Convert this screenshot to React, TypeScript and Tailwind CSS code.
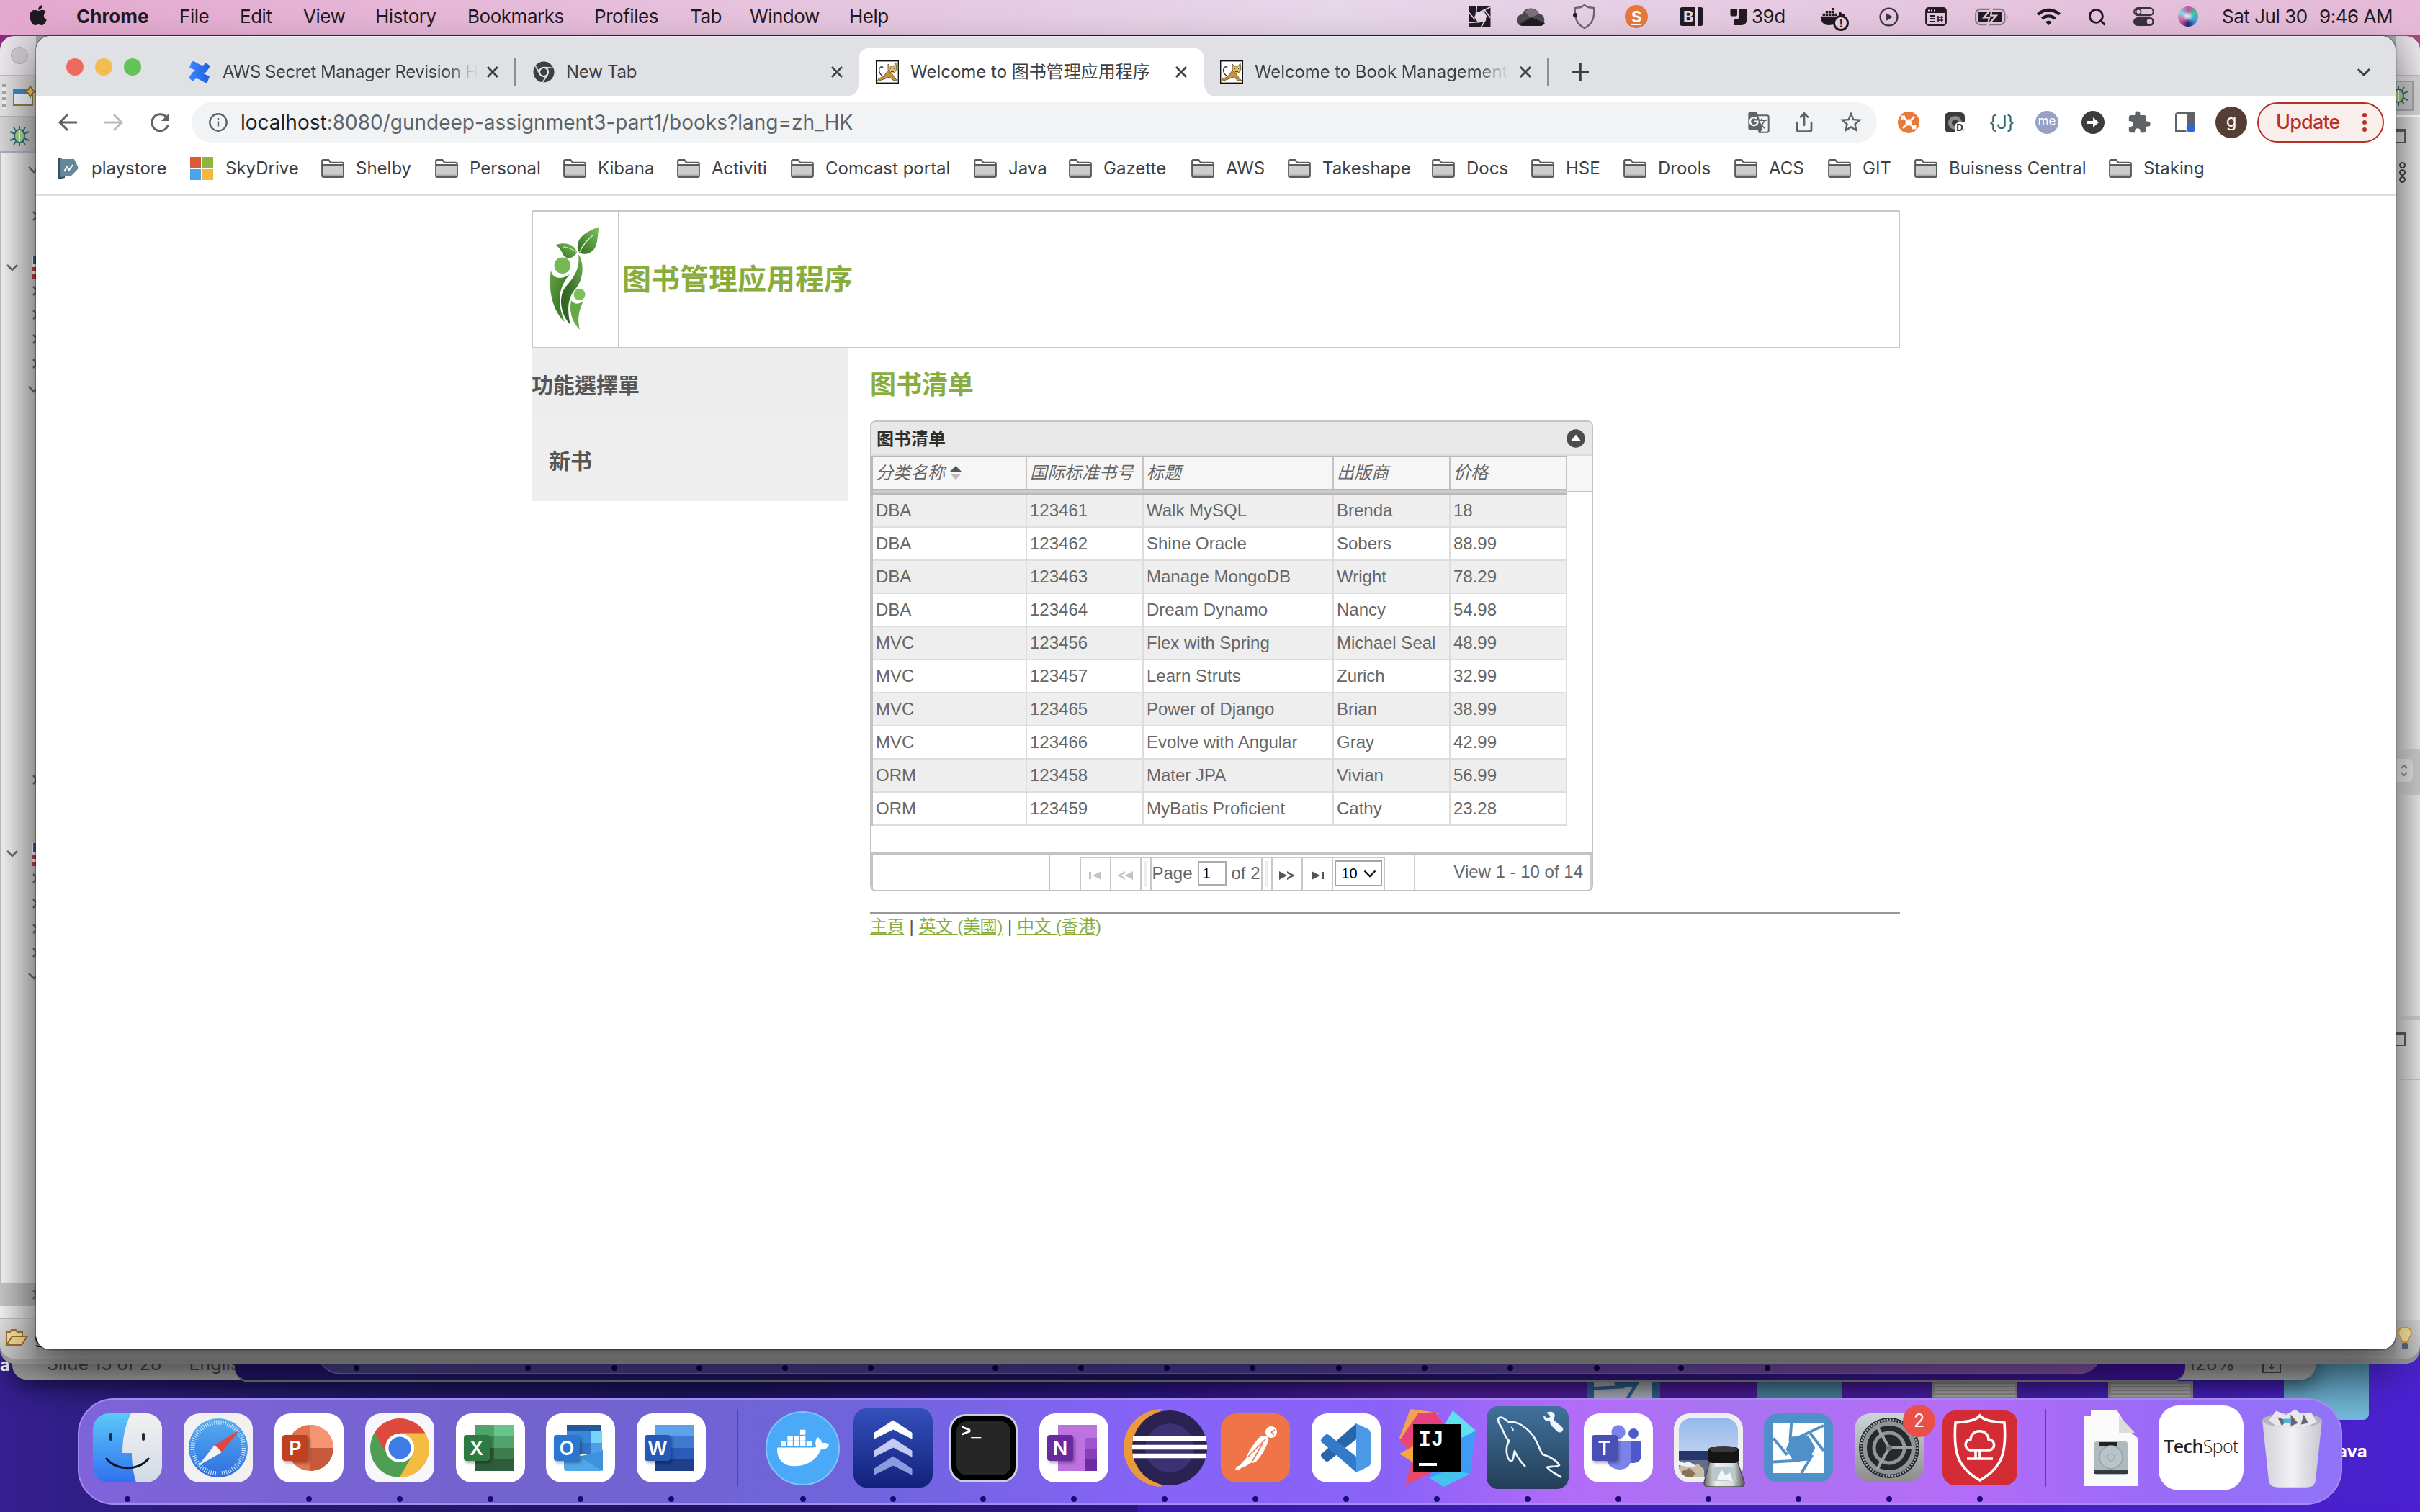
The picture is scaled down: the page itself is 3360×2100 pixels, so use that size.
import React from "react";
import { FaApple, FaDocker, FaChrome } from "react-icons/fa";
import { MdExtension, MdGTranslate, MdStarOutline, MdWifi } from "react-icons/md";
import { Search, Share } from "lucide-react";

const CJK = "font-['Liberation_Sans','Noto_Sans_CJK_SC',sans-serif]";

/* ---------- menu bar ---------- */

const MENUS: [string, string][] = [
  ["Chrome", "w-[143px] font-bold tracking-normal"],
  ["File", "w-[84px]"],
  ["Edit", "w-[88px]"],
  ["View", "w-[100px]"],
  ["History", "w-[128px]"],
  ["Bookmarks", "w-[176px]"],
  ["Profiles", "w-[133px]"],
  ["Tab", "w-[83px]"],
  ["Window", "w-[138px]"],
  ["Help", "w-[60px]"],
];

function Aperture({ className, blade, gap }: { className: string; blade: string; gap: string }) {
  return (
    <svg viewBox="0 0 72 72" className={className}>
      <rect width="72" height="72" fill={blade} />
      <polygon points="26,20 50,18 60,36 50,54 30,56 18,38" fill={gap} />
      <g stroke={gap} strokeWidth="4" fill="none">
        <path d="M26 0 L24 26 M0 22 L20 46 M0 56 L38 54 M40 72 L56 46 M72 40 L52 14 M72 4 L38 20" />
      </g>
    </svg>
  );
}

function MenuBar() {
  return (
    <header className="flex h-12 w-full items-center bg-linear-to-r from-[#e5a8cf] via-[#e6d7e9] via-55% to-[#e5b9d7] pb-[2px] text-[26px] leading-none tracking-[-0.018em] whitespace-nowrap text-[#1f1a20]">
      <div className="flex w-[106px] justify-center">
        <FaApple className="mb-1 size-[32px]" />
      </div>
      {MENUS.map(([label, cls]) => (
        <span key={label} className={cls}>{label}</span>
      ))}
      <div className="ml-auto flex items-center">
        <Aperture className="mr-[36px] h-[30px] w-[31px]" blade="#221c22" gap="#e6d7e9" />
        <svg viewBox="0 0 40 27" className="mr-[38px] h-[27px] w-[40px]">
          <path d="M8 26a8 8 0 0 1-1-16A13 13 0 0 1 31 9a9 9 0 0 1 2 17z" fill="#4f4850" />
          <path d="M11 6a13 13 0 0 1 20 3l-12 6z" fill="#7b737c" />
          <path d="M3 24L20 14l19 8a8 8 0 0 1-7 4H8z" fill="#211c21" />
        </svg>
        <svg viewBox="0 0 32 36" className="mr-[40px] h-[36px] w-[32px]" fill="none" stroke="#6d656e" strokeWidth="2.4">
          <path d="M16 2l5 3 8 1c1 12-1 22-13 28C4 28 2 18 3 6l8-1z" />
          <circle cx="3" cy="16" r="3" fill="#211c21" stroke="none" />
        </svg>
        <span className="mr-[44px] flex size-8 items-center justify-center rounded-full bg-[#e8793a] text-[22px] font-bold text-white underline">S</span>
        <span className="mr-[37px] flex h-[26px] w-[33px] items-center rounded-sm bg-[#221c22] pl-[5px] text-[22px] font-bold text-[#e6d7e9]">
          B<i className="ml-[3px] h-[26px] w-[3px] bg-[#e6d7e9]" />
        </span>
        <svg viewBox="0 0 24 26" className="mr-[6px] h-[25px] w-6">
          <path d="M0 1h10v8q0 3-3 3H2q-2 0-2-2zM13 1h11v15q0 9-9 9H5v-8l5-1q3-1 3-4z" fill="#221c22" />
        </svg>
        <span className="w-[96px]">39d</span>
        <span className="relative mr-[42px] flex h-[32px] w-[39px] items-center">
          <FaDocker className="size-[34px]" />
          <i className="absolute right-0 bottom-[-4px] flex size-[22px] items-center justify-center rounded-full border-[3px] border-[#221c22] bg-[#e6d2e6] text-[15px] font-bold not-italic">!</i>
        </span>
        <svg viewBox="0 0 28 28" className="mr-[37px] h-[27px] w-[27px]">
          <circle cx="14" cy="14" r="12.4" fill="none" stroke="#39323a" strokeWidth="2.4" />
          <path d="M10.500 8.500l9 5.500-9 5.500z" fill="#39323a" />
        </svg>
        <svg viewBox="0 0 30 26" className="mr-[38px] h-[26px] w-[30px]">
          <rect x="1.300" y="1.300" width="27.400" height="23.400" rx="3.500" fill="none" stroke="#221c22" strokeWidth="2.400" />
          <rect x="1" y="1" width="28" height="7" rx="3" fill="#221c22" />
          <path d="M4 4.500h2m2 0h2m2 0h2" stroke="#e6cfe4" strokeWidth="2" />
          <path d="M6 12h7M6 16h7M6 20h7" stroke="#221c22" strokeWidth="2" />
          <path d="M18 12v8M23 12v8M16 14h9M16 18h9" stroke="#221c22" strokeWidth="1.500" />
        </svg>
        <svg viewBox="0 0 49 26" className="mr-[38px] h-[25px] w-[49px]">
          <rect x="1.200" y="2" width="42" height="22" rx="6.500" fill="none" stroke="#857a86" strokeWidth="2.200" />
          <rect x="4.500" y="5.300" width="35" height="15.500" rx="3.500" fill="#221c22" />
          <path d="M25 0L13 14h8l-3 12 13-15h-8z" fill="#221c22" stroke="#e5c6de" strokeWidth="2.400" />
          <path d="M46 9q3 4 0 8z" fill="#857a86" />
        </svg>
        <MdWifi className="mr-[34px] ml-[-3px] h-[36px] w-[39px]" />
        <Search className="mr-[37px] size-[27px]" strokeWidth={2.6} />
        <svg viewBox="0 0 29 26" className="mr-[33px] h-[26px] w-[29px]">
          <rect x="1.200" y="1.200" width="26.600" height="10" rx="5" fill="none" stroke="#39323a" strokeWidth="2.200" />
          <circle cx="7" cy="6.200" r="3.600" fill="none" stroke="#39323a" strokeWidth="1.800" />
          <rect y="14" width="29" height="12" rx="6" fill="#39323a" />
          <circle cx="22.500" cy="20" r="3.800" fill="#e5c2dc" />
        </svg>
        <span className="mr-[33px] size-7 rounded-full bg-[conic-gradient(#d14aa0,#39c5a4,#3fa1e8,#1b2b70,#e8559a,#7ee0e8,#d14aa0)]">
          <i className="m-[9px] block size-[10px] rounded-full bg-white/80 blur-[2px]" />
        </span>
        <span className="w-[135px]">Sat Jul 30</span>
        <span className="w-[140px]">9:46 AM</span>
      </div>
    </header>
  );
}

/* ---------- browser chrome ---------- */

function CloseX() {
  return (
    <svg viewBox="0 0 18 18" className="size-[18px] shrink-0" stroke="#3c4043" strokeWidth="2.800">
      <path d="M2 2l14 14M16 2L2 16" />
    </svg>
  );
}

function Tomcat() {
  return (
    <svg viewBox="0 0 32 32" className="size-8 shrink-0">
      <rect x="0.700" y="0.700" width="30.600" height="30.600" fill="#fff" stroke="#111" strokeWidth="1.400" />
      <path d="M17 5l3 3h5l3-4 1 8-3 5-5 1-4-5z" fill="#e2bb62" stroke="#55432a" strokeWidth="0.800" />
      <path d="M17 14l6 5 3 5 4 4h-5l-6-5-8 3-6 2-3 1 2-4 6-2z" fill="#c8923a" stroke="#55432a" strokeWidth="0.800" />
      <path d="M10 22C4 18 3 12 7 9q3-1 3 2" fill="none" stroke="#333" strokeWidth="1.400" />
      <path d="M20 11h1M25 11h1M21 15h4" stroke="#222" strokeWidth="1.400" />
    </svg>
  );
}

function Confluence() {
  return (
    <svg viewBox="0 0 32 32" className="size-8 shrink-0">
      <defs>
        <linearGradient id="cf" x1="1" x2="0"><stop offset="0" stopColor="#1d5fdc" /><stop offset="1" stopColor="#3f86ff" /></linearGradient>
      </defs>
      <path d="M1 24l5-7c3-4 7-3 11-1l13 6-3 8c-1 1-2 1-3 1l-9-5c-3-1-5-1-6 1l-2 2z" fill="url(#cf)" />
      <path d="M31 8l-5 7c-3 4-7 3-11 1L2 10l3-8c1-1 2-1 3-1l9 5c3 1 5 1 6-1l2-2z" fill="url(#cf)" />
    </svg>
  );
}

function TabStrip() {
  return (
    <div className="flex h-[84px] shrink-0 items-end border-t-2 border-[#eceef1] bg-[#dfe1e5] text-[24px] tracking-[-0.01em] whitespace-nowrap text-[#3c4043]">
      <div className="flex h-[82px] w-[211px] gap-4 pt-[29px] pl-[42px]">
        <i className="size-6 rounded-full bg-[#ed6a5e]" />
        <i className="size-6 rounded-full bg-[#f4bd50]" />
        <i className="size-6 rounded-full bg-[#61c454]" />
      </div>
      <div className="flex h-[68px] w-[455px] items-center">
        <Confluence />
        <div className="ml-4 w-[366px] overflow-hidden bg-linear-to-r from-[#3c4043] from-84% to-transparent to-97% bg-clip-text tracking-[-0.02em] text-transparent">AWS Secret Manager Revision H</div>
        <CloseX />
        <i className="ml-[21px] h-10 w-[2px] bg-[#8b8e92]" />
      </div>
      <div className="flex h-[68px] w-[476px] items-center pl-[24px]">
        <FaChrome className="size-[30px]" />
        <span className="ml-4 w-[367px]">New Tab</span>
        <CloseX />
      </div>
      <div className="relative flex h-[68px] w-[480px] items-center rounded-t-[16px] bg-white pl-[24px]">
        <i className="absolute bottom-0 left-[-16px] size-4 bg-[radial-gradient(circle_at_0_0,transparent_15.500px,white_16px)]" />
        <i className="absolute right-[-16px] bottom-0 size-4 bg-[radial-gradient(circle_at_100%_0,transparent_15.500px,white_16px)]" />
        <Tomcat />
        <span className="ml-4 w-[367px] font-['Inter','Noto_Sans_CJK_SC',sans-serif] tracking-normal">Welcome to 图书管理应用程序</span>
        <CloseX />
      </div>
      <div className="flex h-[68px] w-[478px] items-center pl-[22px]">
        <Tomcat />
        <div className="ml-4 w-[367px] overflow-hidden bg-linear-to-r from-[#3c4043] from-84% to-transparent to-96% bg-clip-text tracking-[-0.004em] text-transparent">Welcome to Book Management</div>
        <CloseX />
        <i className="ml-[21px] h-10 w-[2px] bg-[#8b8e92]" />
      </div>
      <div className="flex h-[68px] flex-1 items-center justify-between pr-[34px] pl-[32px]">
        <svg viewBox="0 0 24 24" className="size-6" stroke="#3c4043" strokeWidth="3.600"><path d="M12 0v24M0 12h24" /></svg>
        <svg viewBox="0 0 20 12" className="h-[12px] w-[20px]" fill="none" stroke="#3c4043" strokeWidth="3"><path d="M2 2l8 8 8-8" /></svg>
      </div>
    </div>
  );
}

function Toolbar() {
  return (
    <div className="flex h-[72px] shrink-0 items-center bg-white text-[#5f6368]">
      <svg viewBox="0 0 28 28" className="ml-[30px] size-7" fill="none" stroke="#5f6368" strokeWidth="3"><path d="M27 14H3M14 3L3 14l11 11" /></svg>
      <svg viewBox="0 0 28 28" className="ml-[36px] size-7" fill="none" stroke="#babcbe" strokeWidth="3"><path d="M1 14h24M14 3l11 11-11 11" /></svg>
      <svg viewBox="0 0 28 28" className="ml-[36px] size-7" fill="none" stroke="#5f6368" strokeWidth="3"><path d="M24 8A11.500 11.500 0 1 0 25.500 17" /><path d="M27 1v11H16z" fill="#5f6368" stroke="none" /></svg>
      <div className="ml-[30px] flex h-14 w-[2340px] items-center rounded-full bg-[#f1f3f4] pl-[24px]">
        <svg viewBox="0 0 26 26" className="size-[26px]" fill="none" stroke="#5f6368" strokeWidth="2.400"><circle cx="13" cy="13" r="11.700" /><path d="M13 11.500v7M13 7v2.800" /></svg>
        <span className="ml-[18px] text-[28px] text-[#5f6368]"><span className="text-[#202124]">localhost</span>:8080/gundeep-assignment3-part1/books?lang=zh_HK</span>
        <MdGTranslate className="mr-[32px] ml-auto size-[32px]" />
        <Share className="mr-[32px] size-[30px]" strokeWidth={2.2} />
        <MdStarOutline className="mr-[18px] size-[36px]" />
      </div>
      <span className="ml-[29px] flex size-[30px] items-center justify-center rounded-full bg-[#e8793a]">
        <svg viewBox="0 0 24 24" className="size-[24px]" stroke="#fff" strokeWidth="3"><path d="M4 4l5 5M20 4l-5 5M4 20l5-5M20 20l-5-5M3 9V4h4M21 15v5h-4" fill="none" /><circle cx="12" cy="12" r="4.500" fill="#fff" stroke="none" /></svg>
      </span>
      <span className="relative ml-[35px] flex size-[28px] items-center justify-center overflow-hidden rounded-md bg-[#3b3b3b]">
        <i className="size-[19px] rounded-full border-[5px] border-[#8a8a8a]" />
        <i className="absolute right-0 bottom-0 flex size-[14px] items-center justify-center rounded-tl-md bg-white text-[13px] leading-none font-bold text-[#333] not-italic">D</i>
      </span>
      <span className="ml-[33px] w-[36px] text-center text-[26px] leading-none tracking-tight whitespace-nowrap text-[#2c6b70]">{"{J}"}</span>
      <span className="ml-[29px] flex size-8 items-center justify-center rounded-full bg-[#9aa0c3] pb-[3px] text-[17px] text-white">me</span>
      <span className="ml-[32px] flex size-8 items-center justify-center rounded-full bg-[#3c3c3c]">
        <svg viewBox="0 0 20 20" className="size-5"><path d="M2 8h8V3l8 7-8 7v-5H2z" fill="#fff" /></svg>
      </span>
      <MdExtension className="ml-[31px] size-[34px]" />
      <svg viewBox="0 0 28 28" className="ml-[33px] size-7"><path d="M1.500 1.500h25v14h-8v-14M1.500 1.500v25h14" fill="none" stroke="#5f6368" strokeWidth="3" /><rect x="18" y="1" width="9" height="15" fill="#5f6368" /><circle cx="22" cy="22" r="6.300" fill="#2f66d5" /></svg>
      <span className="ml-[28px] flex size-[44px] items-center justify-center rounded-full bg-[#573e35] pb-1 text-[24px] text-white">g</span>
      <span className="ml-[14px] flex h-14 w-[176px] items-center rounded-full border-[2.500px] border-[#b83127] bg-[#f8eeec] pl-[24px] text-[27px] font-medium tracking-[-0.03em] text-[#b83127]">
        Update
        <svg viewBox="0 0 6 26" className="ml-auto mr-[22px] h-[26px] w-[6px]" fill="#b83127"><circle cx="3" cy="3" r="3" /><circle cx="3" cy="13" r="3" /><circle cx="3" cy="23" r="3" /></svg>
      </span>
    </div>
  );
}

const BOOKMARKS: [string, string][] = [
  ["Shelby", "w-[158px]"], ["Personal", "w-[178px]"], ["Kibana", "w-[158px]"], ["Activiti", "w-[158px]"],
  ["Comcast portal", "w-[254px]"], ["Java", "w-[132px]"], ["Gazette", "w-[170px]"], ["AWS", "w-[134px]"],
  ["Takeshape", "w-[200px]"], ["Docs", "w-[138px]"], ["HSE", "w-[128px]"], ["Drools", "w-[154px]"],
  ["ACS", "w-[130px]"], ["GIT", "w-[120px]"], ["Buisness Central", "w-[270px]"], ["Staking", "w-[140px]"],
];

function BookmarksBar() {
  return (
    <div className="flex h-[66px] shrink-0 items-center border-b-2 border-[#dadce0] bg-white pb-2 pl-[31px] text-[24px] whitespace-nowrap text-[#3c4043]">
      <div className="flex w-[183px] items-center gap-[18px]">
        <svg viewBox="0 0 28 30" className="h-[30px] w-[28px]"><path d="M0 0l9 3v25l-9 2z" fill="#37505c" /><path d="M3 2h19l5 10q1 3-1 5L18 25 3 27z" fill="#64889a" /><path d="M8 19l4-6 3 4 5-7" fill="none" stroke="#fff" strokeWidth="2" /></svg>
        playstore
      </div>
      <div className="flex w-[182px] items-center gap-[17px]">
        <span className="grid size-8 grid-cols-2 gap-[2px]"><i className="bg-[#de5833]" /><i className="bg-[#8db73a]" /><i className="bg-[#4ba3e8]" /><i className="bg-[#f3b73f]" /></span>
        SkyDrive
      </div>
      {BOOKMARKS.map(([label, w]) => (
        <div key={label} className={"flex items-center gap-[16px] " + w}>
          <svg viewBox="0 0 32 26" className="h-[26px] w-[32px] shrink-0"><path d="M1.200 23V2.800q0-1.600 1.600-1.600h7.400l3 3.600h16q1.600 0 1.600 1.600V23q0 1.800-1.800 1.800H3q-1.800 0-1.800-1.800z" fill="#fff" stroke="#5b5b5b" strokeWidth="2.200" /><rect x="2.300" y="9" width="27.400" height="14.700" fill="#cdcdcd" /><path d="M2 8h28" stroke="#5b5b5b" strokeWidth="2.200" /><path d="M2.500 22.500h27" stroke="#aaa" strokeWidth="2" /></svg>
          {label}
        </div>
      ))}
    </div>
  );
}

/* ---------- page ---------- */

const ROWS = [
  ["DBA", "123461", "Walk MySQL", "Brenda", "18"],
  ["DBA", "123462", "Shine Oracle", "Sobers", "88.99"],
  ["DBA", "123463", "Manage MongoDB", "Wright", "78.29"],
  ["DBA", "123464", "Dream Dynamo", "Nancy", "54.98"],
  ["MVC", "123456", "Flex with Spring", "Michael Seal", "48.99"],
  ["MVC", "123457", "Learn Struts", "Zurich", "32.99"],
  ["MVC", "123465", "Power of Django", "Brian", "38.99"],
  ["MVC", "123466", "Evolve with Angular", "Gray", "42.99"],
  ["ORM", "123458", "Mater JPA", "Vivian", "56.99"],
  ["ORM", "123459", "MyBatis Proficient", "Cathy", "23.28"],
];

function Logo() {
  return (
    <svg viewBox="60 42 76 148" className="h-[148px] w-[76px]">
      <defs>
        <linearGradient id="lf" x1="1" y1="0" x2="0" y2="1"><stop offset="0" stopColor="#7fc45c" /><stop offset="1" stopColor="#2e6b1f" /></linearGradient>
        <linearGradient id="bd" x1="0" y1="0" x2="1" y2="1"><stop offset="0" stopColor="#67a63f" /><stop offset="0.600" stopColor="#3b7a27" /><stop offset="1" stopColor="#6fb04a" /></linearGradient>
        <linearGradient id="st" x1="1" y1="0" x2="0" y2="1"><stop offset="0" stopColor="#6fae4e" /><stop offset="0.550" stopColor="#39702a" /><stop offset="1" stopColor="#2f5a20" /></linearGradient>
      </defs>
      <path d="M132 45C112 52 98 62 103 79C106 84 118 85 125 76C131 67 129 56 132 45z" fill="url(#lf)" />
      <path d="M105 80C109 70 115 64 124 56" stroke="#e3f2da" strokeWidth="1.300" fill="none" />
      <path d="M72 70C84 66 97 68 101 80C98 89 86 91 82 84C79 77 76 74 72 70z" fill="url(#lf)" />
      <path d="M100 80C94 76 88 73 82 73" stroke="#e3f2da" strokeWidth="1" fill="none" />
      <circle cx="80.800" cy="98.700" r="11.300" fill="#74b954" />
      <path d="M65 105C66 116 78 120 91 111C78 126 71 146 84 177C70 164 60 138 65 105z" fill="url(#bd)" />
      <path d="M103 83C112 96 110 118 100 130C90 141 86 155 92 181C77 165 76 142 84 130C94 118 106 106 103 83z" fill="url(#st)" />
      <circle cx="104.500" cy="139" r="8" fill="#7cc25a" />
      <path d="M93 147C98 154 106 152 110 148C104 160 101 173 105 188C93 176 90 160 93 147z" fill="#67a847" />
    </svg>
  );
}

const COLS = "grid-cols-[214px_162px_264px_162px_162px]";

function NavTriangles({ kind, muted }: { kind: "first" | "prev" | "next" | "last"; muted?: boolean }) {
  const c = muted ? "#c4c4c4" : "#555555";
  return (
    <svg viewBox="0 0 24 12" className="h-[12px] w-[24px]" fill={c}>
      {kind === "first" && <path d="M3 1h3v10H3zM20 0v12L8 6z" />}
      {kind === "prev" && <path d="M11 0v3L5 6l6 3v3L0 6zM22 0v12L11 6z" />}
      {kind === "next" && <path d="M12 0v3l6 3-6 3v3l11-6zM1 0v12l11-6z" />}
      {kind === "last" && <path d="M18 1h3v10h-3zM4 0v12l12-6z" />}
    </svg>
  );
}

function BookGrid() {
  return (
    <section className="flex h-[654px] w-[1004px] flex-col overflow-hidden rounded-[8px] border-2 border-[#c3c3c3] bg-white text-[24px] leading-none text-[#666666]">
      <div className="flex h-[47px] shrink-0 items-center justify-between border-b-2 border-[#dcdcdc] bg-[#e8e8e8] pr-[9px] pl-[7px]">
        <b className="pt-[2px] text-[#2f2f2f]">图书清单</b>
        <svg viewBox="0 0 26 26" className="size-[26px]"><circle cx="13" cy="13" r="12.700" fill="#4c4c4c" /><path d="M13 7.500l6.500 8.500h-13z" fill="#fff" /></svg>
      </div>
      <div className="flex h-[51px] shrink-0 bg-[#f6f6f6]">
        <div className={"grid h-[54px] border-y-2 border-l-2 border-[#b9b9b9] italic " + COLS}>
          {["分类名称", "国际标准书号", "标题", "出版商", "价格"].map((h, i) => (
            <div key={h} className="flex h-[44px] items-center border-r-2 border-[#c3c3c3] bg-[#f6f6f6] pl-[4px] whitespace-nowrap">
              {h}
              {i === 0 && (
                <svg viewBox="0 0 16 20" className="ml-[7px] h-[20px] w-[16px]"><path d="M8 0l8 8H0z" fill="#555" /><path d="M1 11.500h14L8 19.500z" fill="#bdbdbd" /></svg>
              )}
            </div>
          ))}
          <i className="col-span-5 h-[6px] border-t-2 border-[#b5b5b5] bg-[#cbcbcb]" />
        </div>
        <i className="h-[51px] flex-1 border-b-2 border-[#c3c3c3]" />
      </div>
      <div className="flex flex-1 flex-col pt-[3px]">
        {ROWS.map((r, i) => (
          <div key={r[1]} className={"grid h-[46px] w-[966px] border-l-2 border-[#c3c3c3] " + COLS + (i % 2 ? " bg-white" : " bg-[#eeeeee]")}>
            {r.map((c, j) => (
              <span key={j} className="flex items-center border-r-2 border-b-2 border-[#dddddd] pl-[4px] whitespace-nowrap">{c}</span>
            ))}
          </div>
        ))}
      </div>
      <div className="flex h-[52px] shrink-0 border-t-4 border-[#c3c3c3]">
        <i className="w-[248px] border-r-2 border-l-2 border-[#c3c3c3]" />
        <div className="flex w-[507px] justify-center border-r-2 border-[#cccccc]">
          <div className="mt-[2px] flex w-[424px] items-stretch border-t-2 border-l-2 border-[#c8c8c8] *:flex *:items-center *:justify-center *:border-r-2 *:border-[#c8c8c8]">
            <span className="w-[42px] pt-1"><NavTriangles kind="first" muted /></span>
            <span className="w-[42px] pt-1"><NavTriangles kind="prev" muted /></span>
            <span className="w-[14px]"><i className="h-[36px] w-[4px] bg-[#eeeeee]" /></span>
            <span className="w-[154px] pb-[2px] whitespace-nowrap">Page<i className="mx-[7px] flex h-[34px] w-[40px] items-center border-2 border-[#ababab] pl-[5px] text-[20px] text-black not-italic">1</i>of 2</span>
            <span className="w-[14px]"><i className="h-[36px] w-[4px] bg-[#eeeeee]" /></span>
            <span className="w-[42px] pt-1"><NavTriangles kind="next" /></span>
            <span className="w-[42px] pt-1"><NavTriangles kind="last" /></span>
            <span className="w-[72px] pb-[2px]">
              <i className="flex h-[36px] w-[66px] items-center gap-[8px] border-2 border-[#a5a5a5] pl-[8px] text-[20px] text-black not-italic">10
                <svg viewBox="0 0 18 11" className="h-[11px] w-[18px]" fill="none" stroke="#111" strokeWidth="2.400"><path d="M1.500 1.500L9 9l7.500-7.500" /></svg>
              </i>
            </span>
          </div>
        </div>
        <div className="flex flex-1 items-center justify-end border-r-2 border-[#cccccc] pr-[10px] pb-[3px]">View 1 - 10 of 14</div>
      </div>
    </section>
  );
}

function Page() {
  return (
    <main className={"flex w-full flex-1 flex-col bg-white pl-[688px] text-[24px] text-[#555555] " + CJK}>
      <div className="mt-[20px] flex h-[192px] w-[1900px] border-2 border-[#c8c8c8]">
        <div className="flex w-[120px] items-center justify-center border-r-2 border-[#c8c8c8] pr-[2px] pb-1"><Logo /></div>
        <h1 className="flex items-center pl-[4px] text-[40px] leading-none font-bold text-[#88ad3c]">图书管理应用程序</h1>
      </div>
      <div className="flex w-[1900px]">
        <nav className="flex h-[212px] w-[440px] flex-col bg-[#eeeeee] text-[30px] leading-none font-bold">
          <div className="flex h-[101px] items-center bg-[#ededed] pb-[4px]"><span className="font-['Noto_Sans_CJK_TC',sans-serif]">功能選擇單</span></div>
          <div className="flex h-[111px] items-center pl-[24px]">新书</div>
        </nav>
        <div className="ml-[30px] flex w-[1430px] flex-col">
          <h2 className="flex h-[100px] items-center pt-[2px] text-[36px] leading-none font-bold text-[#88ad3c]">图书清单</h2>
          <BookGrid />
          <footer className="mt-[29px] flex h-[40px] items-center gap-[7px] border-t-2 border-[#999999] pb-[3px] font-['Liberation_Sans','Noto_Sans_CJK_TC',sans-serif] leading-none tracking-[-0.012em] text-[#555]">
            <a className="text-[#88ad3c] underline">主頁</a>|
            <a className="text-[#88ad3c] underline">英文 (美國)</a>|
            <a className="text-[#88ad3c] underline">中文 (香港)</a>
          </footer>
        </div>
      </div>
    </main>
  );
}

/* ---------- background windows ---------- */

function Bug() {
  return (
    <svg viewBox="0 0 32 32" className="size-8 shrink-0">
      <path d="M16 2v28M3 10l26 12M3 22l26-12M8 4l4 6M24 28l-4-6M24 4l-4 6M8 28l4-6" stroke="#356f6f" strokeWidth="2" />
      <ellipse cx="16" cy="16" rx="7" ry="9" fill="#a6cf86" stroke="#2d6b80" strokeWidth="2" />
      <path d="M16 8v16" stroke="#e9f5d8" strokeWidth="2" />
    </svg>
  );
}

const DOWN = [[17, 371], [47, 235], [47, 540], [17, 1185], [47, 1355]];
const SIDE = [300, 404, 437, 471, 505, 1083, 1220, 1255, 1290, 1323, 1798];

function EditorWindow() {
  return (
    <div className="absolute top-[50px] left-0 flex h-[1837px] w-[3360px] flex-col overflow-hidden rounded-[20px] bg-[#a5a5a5] shadow-[0_7px_0_#9a9a9a]">
      <div className="flex flex-1 justify-between">
        <div className="relative flex w-[50px] flex-col">
          <div className="flex h-[56px] items-center justify-center border-b-2 border-[#bdbabd] bg-linear-to-r from-[#ece7ec] to-[#d3cfd4] pl-1"><i className="size-6 rounded-full border border-[#aaa6aa] bg-[#c9c5c9]" /></div>
          <div className="flex h-[57px] items-center gap-[10px] border-b-2 border-[#b5b5b5] bg-linear-to-r from-[#e2e2e2] to-[#c6c6c6] pl-[3px]">
            <i className="h-[34px] w-[5px] bg-[repeating-linear-gradient(#a5a5a5_0_4px,#eee_4px_9px)]" />
            <svg viewBox="0 0 32 30" className="h-[30px] w-[32px]"><rect x="1" y="5" width="26" height="22" fill="#e8f2f8" stroke="#8d7a3a" strokeWidth="2" /><path d="M0 5h27v6H0z" fill="#3f86bf" /><path d="M24 0l3 6 5 2-5 2-3 6-3-6-5-2 5-2z" fill="#e8c56c" stroke="#96691b" strokeWidth="1.500" /></svg>
          </div>
          <div className="flex h-[50px] items-center border-b-[3px] border-[#a5abc6] bg-linear-to-r from-[#d6d6d6] to-[#b6b6b6] pt-[5px] pl-[11px]"><Bug /></div>
          <div className="h-[1569px] border-l-2 border-[#bbb] bg-linear-to-r from-[#f0f0f0] to-[#c2c2c2]" />
          <div className="flex h-[32px] bg-linear-to-r from-[#c4c4c4] to-[#a5a5a5]" />
          <div className="h-[18px] border-b-2 border-[#b5b5b5] bg-linear-to-r from-[#f0f0f0] to-[#c2c2c2]" />
          <div className="flex h-[55px] items-center bg-linear-to-br from-[#dedede] to-[#a8a8a8] pb-[4px] pl-[7px] text-[24px]">
            <svg viewBox="0 0 32 24" className="h-[24px] w-[32px] shrink-0"><path d="M2 22V4h5l2-3h6l2 3h7v5" fill="#f0dba0" stroke="#9a6d2c" strokeWidth="2" /><path d="M2 22l8-12h21l-8 12z" fill="#eed58f" stroke="#9a6d2c" strokeWidth="2" /></svg>
            <span className="ml-[9px] text-black">g</span>
          </div>
          <svg viewBox="0 50 50 1836" className="absolute top-0 left-0 h-[1836px] w-[50px]" fill="none" stroke="#666" strokeWidth="2.500">
            {DOWN.map(([x, y]) => <path key={y} d={`M${x - 7} ${y - 3}l7 7 7-7`} />)}
            {SIDE.map((y) => <path key={y} d={`M46 ${y - 6}l6 6-6 6`} />)}
            {[355, 1171].map((y) => (
              <g key={y} stroke="none"><rect x="44" y={y} width="8" height="32" fill="#eee" /><rect x="46" y={y} width="6" height="12" fill="#3b5b93" /><path d={`M44 ${y + 16}h8v6h-8zM44 ${y + 26}h8v6h-8z`} fill="#b8393e" /></g>
            ))}
          </svg>
        </div>
        <div className="relative flex w-[34px] flex-col">
          <div className="h-[56px] border-b-2 border-[#bdbabd] bg-linear-to-r from-[#d3cfd4] to-[#ece7ec]" />
          <div className="flex h-[57px] items-center border-b-[3px] border-white bg-[#d5d5d5]"><span className="flex h-[42px] w-[25px] items-center overflow-hidden border-2 border-l-0 border-[#a5a5a5] bg-[#c5c5c5]"><span className="ml-[-12px]"><Bug /></span></span></div>
          <div className="h-[877px] bg-linear-to-r from-[#c8c8c8] to-[#e8e8e8] pt-[16px]">
            <i className="block h-[20px] w-[14px] border-2 border-t-[5px] border-l-0 border-[#5a5a5a]" />
            <div className="mt-[26px] ml-[5px] flex flex-col gap-[1px]"><i className="size-[9px] rounded-full border-2 border-[#444]" /><i className="size-[9px] rounded-full border-2 border-[#444]" /><i className="size-[9px] rounded-full border-2 border-[#444]" /></div>
          </div>
          <div className="flex h-[64px] items-center bg-[#cacaca] pb-[4px]">
            <span className="flex h-[32px] w-[24px] items-center justify-center rounded-r-md bg-[#dedede]"><svg viewBox="0 0 10 18" className="h-[18px] w-[10px]" fill="none" stroke="#888" strokeWidth="2"><path d="M1 6l4-4 4 4M1 12l4 4 4-4" /></svg></span>
          </div>
          <div className="h-[313px] border-b-[6px] border-[#c9c9c9] bg-linear-to-r from-[#c8c8c8] to-[#e8e8e8]" />
          <div className="h-[83px] border-b-2 border-[#c2c2c2] bg-linear-to-r from-[#c8c8c8] to-[#e8e8e8] pt-[16px]"><i className="block h-[20px] w-[14px] border-2 border-t-[5px] border-l-0 border-[#5a5a5a]" /></div>
          <div className="h-[334px] bg-linear-to-r from-[#c8c8c8] to-[#e8e8e8]" />
          <div className="flex h-[53px] items-center bg-linear-to-bl from-[#d8d8d8] to-[#a8a8a8] pb-[4px] pl-[3px]">
            <svg viewBox="0 0 20 32" className="h-[32px] w-[20px]"><path d="M6 21C6 15 1 14 1 8a9 8 0 0 1 18 0c0 6-5 7-5 13z" fill="#f6e6a4" stroke="#dba63e" strokeWidth="2" /><rect x="6" y="22" width="8" height="9" rx="2" fill="#5a6a80" /></svg>
          </div>
        </div>
      </div>
    </div>
  );
}

const SMALL_DOTS = ["ml-[53px]", "ml-[230px]", "ml-[112px]", "ml-[110px]", "ml-[111px]", "ml-[111px]", "ml-[165px]", "ml-[111px]", "ml-[111px]", "ml-[111px]", "ml-[112px]", "ml-[111px]", "ml-[111px]", "ml-[112px]", "ml-[109px]", "ml-[112px]"];

function Desktop() {
  return (
    <>
      <div className="absolute inset-0 bg-[linear-gradient(90deg,#35208f_0%,#231a70_12%,#1c1560_28%,#2c1585_48%,#4a1b95_58%,#4c1a98_75%,#4520b8_88%,#4b22d2_100%)]" />
      <div className="absolute top-0 left-0 h-[140px] w-full bg-linear-to-r from-[#8d2b83] via-[#30262f] to-[#a34a80]" />
      <div className="absolute bottom-0 left-[1580px] h-[14px] w-[1780px] bg-linear-to-r from-[#371aa8] to-[#4a20cf]" />
      <div className="absolute top-[1920px] left-[2203px] h-[24px] w-[102px] overflow-hidden bg-[#2f5c8c]"><Aperture className="mt-[-54px] ml-[10px] h-[80px] w-[80px]" blade="#a5abb3" gap="#2f5c8c" /></div>
      <div className="absolute top-[1890px] left-[2439px] h-[60px] w-[118px] bg-[#47809c]" />
      <div className="absolute top-[1918px] left-[2683px] h-[40px] w-[118px] border-4 border-[#8f8f8f] bg-[repeating-linear-gradient(#a9a9a9_0_3px,#8f8f8f_3px_5px)]" />
      <div className="absolute top-[1918px] left-[2927px] h-[40px] w-[118px] border-4 border-[#8f8f8f] bg-[repeating-linear-gradient(#a9a9a9_0_3px,#8f8f8f_3px_5px)]" />
      <div className="absolute top-[1890px] left-[3171px] h-[82px] w-[118px] rounded-b-lg border-b-4 border-[#6fb9dc] bg-linear-to-b from-[#4d87a3] to-[#74b8d8]" />
      <span className="absolute top-[1998px] left-[3231px] text-[24px] font-bold text-white">Java</span>
      <span className="absolute top-[1878px] left-0 text-[24px] font-bold text-white">a</span>
      <div className="absolute top-[1860px] left-[17px] flex h-[56px] w-[3198px] items-end justify-between rounded-b-[20px] bg-linear-to-b from-[#6f6f6f] to-[#989898] px-[48px] pb-[9px] text-[25px] leading-none text-[#3c3c3c] shadow-[0_10px_30px_rgba(0,0,0,0.5)]">
        <span className="flex gap-[38px]"><span>Slide 15 of 28</span><span>English</span></span>
        <span className="flex items-end gap-[38px]"><span>128%</span>
          <svg viewBox="0 0 26 26" className="h-[26px] w-[26px]" fill="none" stroke="#3c3c3c" strokeWidth="2"><path d="M1 1h24v24H1zM13 8v12M10 17l3 3 3-3" /></svg>
        </span>
      </div>
      <div className="absolute top-[1860px] left-[326px] flex h-[60px] w-[2708px] flex-col justify-end overflow-hidden rounded-b-[20px] border-b-[3px] border-[#6b6b6b] bg-linear-to-r from-[#1d1460] via-[#1b1250] to-[#38108c] pb-[8px]">
        <div className="ml-[112px] flex h-[49px] w-[2482px] items-end rounded-b-[36px] border-b-2 border-[#6a5aa0] bg-linear-to-r from-[#403a78] via-[#43358a] to-[#7a4a98] pb-[3px]">
          {SMALL_DOTS.map((m, i) => <i key={i} className={"size-[8px] rounded-full bg-[#0c0540] " + m} />)}
        </div>
      </div>
    </>
  );
}

/* ---------- dock ---------- */

function OfficeTile({ letter, box, children }: { letter: string; box: string; children: React.ReactNode }) {
  return (
    <div className="relative flex size-24 items-center justify-center rounded-[22px] bg-white">
      <svg viewBox="0 0 96 96" className="absolute size-24">{children}</svg>
      <span className={"absolute top-[30px] left-[11px] flex size-[36px] items-center justify-center rounded-[4px] text-[27px] leading-none font-semibold text-white shadow-[2px_3px_4px_rgba(0,0,0,0.35)] " + box}>{letter}</span>
    </div>
  );
}

function Finder() {
  return (
    <svg viewBox="0 0 96 96" className="size-24">
      <defs>
        <linearGradient id="fa" x2="0" y2="1"><stop offset="0" stopColor="#5cc8f9" /><stop offset="1" stopColor="#2f71f0" /></linearGradient>
        <linearGradient id="fb" x2="0" y2="1"><stop offset="0" stopColor="#f2f1f1" /><stop offset="1" stopColor="#d2dae6" /></linearGradient>
        <clipPath id="fc"><rect width="96" height="96" rx="22" /></clipPath>
      </defs>
      <g clipPath="url(#fc)">
        <rect width="96" height="96" fill="url(#fa)" />
        <path d="M53 0C44 18 41 36 41 55h13c0 14 2 28 6 41h40V0z" fill="url(#fb)" />
      </g>
      <path d="M25 29v7M70 29v7" stroke="#1d2a44" strokeWidth="4" strokeLinecap="round" />
      <path d="M19 63c14 17 44 17 58 0" fill="none" stroke="#10151f" strokeWidth="3" strokeLinecap="round" />
    </svg>
  );
}

function Safari() {
  return (
    <svg viewBox="0 0 96 96" className="size-24">
      <defs><linearGradient id="sa" x2="0" y2="1"><stop offset="0" stopColor="#55aef0" /><stop offset="1" stopColor="#2f6fe0" /></linearGradient></defs>
      <rect width="96" height="96" rx="22" fill="#f1f1f1" />
      <circle cx="48" cy="48" r="41" fill="url(#sa)" />
      <circle cx="48" cy="48" r="35.500" fill="none" stroke="#dcecff" strokeWidth="6" strokeDasharray="1 2.100" />
      <path d="M78 23L53 54 43 44z" fill="#e0483e" /><path d="M20 73l23-29 10 10z" fill="#f3f3f3" />
    </svg>
  );
}

function ChromeIcon() {
  return (
    <svg viewBox="0 0 96 96" className="size-24">
      <rect width="96" height="96" rx="22" fill="#f7f6fb" />
      <path d="M48 48L12.500 27.500A41 41 0 0 1 83.500 27.500z" fill="#dc4a3d" />
      <path d="M48 48L83.500 27.500A41 41 0 0 1 48 89z" fill="#f4bd42" />
      <path d="M48 48l17.500 10.200L48 89A41 41 0 0 1 12.500 27.500z" fill="#4e9f55" />
      <path d="M13 27l17.500 31L48 48V27.500z" fill="#dc4a3d" />
      <path d="M48 27.500h35.500A41 41 0 0 1 48 89l17.500-30z" fill="#f4bd42" />
      <circle cx="48" cy="48" r="20" fill="#fff" /><circle cx="48" cy="48" r="15.500" fill="#3f7ce8" />
    </svg>
  );
}

function Divider() {
  return <i className="h-[108px] w-[2px] bg-[#5340b8]" />;
}

type DockItem = { key: string; w: string; dot?: boolean; el: React.ReactNode };

const DOCK: DockItem[] = [
  { key: "finder", w: "w-[126px]", dot: true, el: <Finder /> },
  { key: "safari", w: "w-[126px]", el: <Safari /> },
  { key: "powerpoint", w: "w-[126px]", dot: true, el: (
    <OfficeTile letter="P" box="bg-[#bf4122]"><circle cx="50" cy="48" r="32" fill="#e2754f" /><path d="M50 16a32 32 0 0 1 32 32H50z" fill="#f49473" /><path d="M50 80a32 32 0 0 0 32-32H50z" fill="#c75a3b" /></OfficeTile>) },
  { key: "chrome", w: "w-[126px]", dot: true, el: <ChromeIcon /> },
  { key: "excel", w: "w-[125px]", dot: true, el: (
    <OfficeTile letter="X" box="bg-[#2f7a42]"><path d="M26 16h27v16H26z" fill="#52a36b" /><path d="M53 16h27v16H53z" fill="#66c48b" /><path d="M26 32h27v16H26z" fill="#3f8a56" /><path d="M53 32h27v16H53z" fill="#52a36b" /><path d="M26 48h27v32H26z" fill="#2d5d3a" /><path d="M53 48h27v16H53z" fill="#3b7d4b" /><path d="M26 64h54v16H26z" fill="#2d5d3a" /></OfficeTile>) },
  { key: "outlook", w: "w-[126px]", dot: true, el: (
    <OfficeTile letter="O" box="bg-[#2b77cf]"><path d="M29 16h48v10H29z" fill="#22599f" /><path d="M29 25h34v16H29z" fill="#3a88d8" /><path d="M62 25h16v16H62z" fill="#74d4fa" /><path d="M29 41h34v16H29z" fill="#2f74c9" /><path d="M62 41h16v16H62z" fill="#4f9fe8" /><path d="M25 50l27 14 27-14v26q0 4-4 4H29q-4 0-4-4z" fill="#52a8e6" /><path d="M45 60l34 20V52z" fill="#3d92dc" /></OfficeTile>) },
  { key: "word", w: "w-[126px]", dot: true, el: (
    <OfficeTile letter="W" box="bg-[#2658b5]"><path d="M26 16h54v16H26z" fill="#5ba2e8" /><path d="M26 32h54v16H26z" fill="#4079cd" /><path d="M26 48h54v16H26z" fill="#2a5bb8" /><path d="M26 64h54v16H26z" fill="#1e3f8a" /></OfficeTile>) },
  { key: "d1", w: "w-[57px]", el: <Divider /> },
  { key: "docker", w: "w-[125px]", dot: true, el: (
    <span className="flex size-[103px] items-center justify-center rounded-full border-2 border-[#7cc4fb] bg-[#4aaaf8]"><FaDocker className="size-[72px] text-white" /></span>) },
  { key: "chevrons", w: "w-[125px]", dot: true, el: (
    <svg viewBox="0 0 110 110" className="size-[110px]">
      <defs><linearGradient id="cv" x2="0" y2="1"><stop offset="0" stopColor="#3450bb" /><stop offset="1" stopColor="#12217c" /></linearGradient></defs>
      <rect width="110" height="110" rx="18" fill="url(#cv)" />
      <path d="M55 17l26 17v8L55 29 29 42v-8z" fill="#fff" stroke="#fff" strokeWidth="1" />
      <path d="M55 42l26 17v8L55 54 29 67v-8z" fill="#c4caf3" stroke="#c4caf3" />
      <path d="M55 67l26 17v8L55 79 29 92v-8z" fill="#8b9be0" stroke="#8b9be0" />
    </svg>) },
  { key: "terminal", w: "w-[126px]", dot: true, el: (
    <span className="flex size-[95px] items-center justify-center rounded-[22px] border-[3px] border-[#c9d2d8] bg-black">
      <span className="size-[75px] rounded-[14px] bg-[#262626] pt-[4px] pl-[7px] font-['Liberation_Mono',monospace] text-[23px] leading-none font-bold text-white">&gt;_</span>
    </span>) },
  { key: "onenote", w: "w-[126px]", dot: true, el: (
    <OfficeTile letter="N" box="bg-[#6a2a9f]"><path d="M26 16h38v64H26z" fill="#bd72e0" /><path d="M64 16h16v18H64z" fill="#bd72e0" /><path d="M64 34h16v15H64z" fill="#9f55cb" /><path d="M64 49h16v15H64z" fill="#8540b8" /><path d="M64 64h16v16H64z" fill="#6b2ba2" /></OfficeTile>) },
  { key: "eclipse", w: "w-[126px]", dot: true, el: (
    <svg viewBox="0 0 118 108" className="h-[108px] w-[118px]">
      <path d="M56 0A54 54 0 0 0 56 108A66 66 0 0 1 56 0z" fill="#eb9a3b" />
      <circle cx="66" cy="54" r="52" fill="#2a2352" /><circle cx="66" cy="54" r="34" fill="#3b3273" />
      <path d="M15 41h102M14 53h104M15 65h102" stroke="#fff" strokeWidth="6.500" />
    </svg>) },
  { key: "postman", w: "w-[126px]", dot: true, el: (
    <span className="flex size-24 items-center justify-center rounded-[22px] bg-[#ef7548]">
      <svg viewBox="0 0 96 96" className="size-24"><circle cx="70" cy="26" r="8" fill="#fff" /><path d="M70 26l5-3M70 26l4 4" stroke="#ef7548" strokeWidth="1.500" /><path d="M64 32q4 3 1 9-5 14-16 26-4 3-7 1l-3-4-5 1 6-14 11-15q6-7 13-4z" fill="#fff" /><path d="M40 60l6 5q-8 8-18 11l-2 3-6-1 2-4 5-2q4-7 13-12z" fill="#fff" /><path d="M62 36L38 60M58 42l-14 24" stroke="#ef7548" strokeWidth="1.600" /></svg>
    </span>) },
  { key: "vscode", w: "w-[126px]", dot: true, el: (
    <span className="flex size-24 items-center justify-center rounded-[22px] bg-white">
      <svg viewBox="0 0 96 96" className="size-24"><path d="M62 14v22L24 66q-3 2-5 0l-5-5q-2-3 0-5z" fill="#2867a7" /><path d="M62 82V60L24 30q-3-2-5 0l-5 5q-2 3 0 5z" fill="#337bc9" /><path d="M62 14l17 8q3 2 3 5v42q0 3-3 5l-17 8z" fill="#4b9ae9" /></svg>
    </span>) },
  { key: "intellij", w: "w-[126px]", dot: true, el: (
    <span className="relative flex h-[108px] w-[108px] items-center justify-center">
      <svg viewBox="0 0 108 108" className="absolute size-[108px]">
        <path d="M17 0l38 5 8 30-45 20L2 40z" fill="#f0a352" /><path d="M28 6l24-2 20 30-40 12L2 44z" fill="#e8407f" /><path d="M76 2l32 28-8 60-36 18L44 96z" fill="#3f9cf5" /><path d="M76 2l32 28-20 10-28-10z" fill="#5fe0f2" /><path d="M2 44l20 20L10 106l40-20V40z" fill="#ea4a68" /><path d="M2 62l22-12v26z" fill="#f4a83c" /><path d="M44 96l20 12 36-18-30-6z" fill="#46c2ec" />
      </svg>
      <span className="relative flex size-[67px] flex-col bg-black pt-[8px] pl-[8px] font-['Liberation_Mono',monospace] text-[29px] leading-none font-bold text-white">IJ<i className="mt-[17px] h-[4px] w-[25px] bg-white" /></span>
    </span>) },
  { key: "mysql", w: "w-[126px]", dot: true, el: (
    <svg viewBox="0 0 114 116" className="h-[116px] w-[114px]" fill="none">
      <defs><linearGradient id="my" x2="0" y2="1"><stop offset="0" stopColor="#41719c" /><stop offset="1" stopColor="#233f57" /></linearGradient></defs>
      <rect width="114" height="115" rx="16" fill="url(#my)" />
      <path d="M54 84C48 78 43 72 39 62C37 68 38 75 35 76C30 77 27 66 28 58C28 53 31 50 31 48C25 42 23 33 20 28C16 22 14 17 19 15.500C24 15 28 21 31 22C42 20 56 29 66 43C73 55 74 62 78 67C88 70 98 76 101 82C96 85 88 83 84 85C90 92 97 94 104 99" stroke="#eef7fd" strokeWidth="2.600" strokeLinejoin="round" />
      <path d="M34 29q4 1 3 6-1-4-3-6z" fill="#eef7fd" stroke="#eef7fd" />
      <path d="M83 9q10-4 12 4l-2 6 11 9q4 4 1 7t-7 0l-9-9-1-5q-9 1-9-8l6 4 4-3z" fill="#eef7fd" />
    </svg>) },
  { key: "teams", w: "w-[125px]", dot: true, el: (
    <OfficeTile letter="T" box="bg-[#4850b8]"><circle cx="48" cy="26" r="9.700" fill="#7b83eb" /><circle cx="69" cy="28" r="7" fill="#5059c9" /><path d="M58 39h20q2 0 2 2v16q0 12-12 12-6 0-10-6z" fill="#5059c9" /><path d="M32 39h32q2 0 2 2v20q0 17-17 17-18-2-17-17z" fill="#7b83eb" /></OfficeTile>) },
  { key: "preview", w: "w-[125px]", dot: true, el: (
    <svg viewBox="0 0 100 102" className="mt-[6px] ml-[4px] h-[102px] w-[100px]">
      <defs>
        <linearGradient id="pv" x2="0" y2="1"><stop offset="0" stopColor="#95b8ec" /><stop offset="1" stopColor="#bccff0" /></linearGradient>
        <linearGradient id="pg"><stop offset="0" stopColor="#6a6a6a" /><stop offset="0.300" stopColor="#eeeeee" /><stop offset="0.700" stopColor="#d8dde0" /><stop offset="1" stopColor="#555" /></linearGradient>
        <clipPath id="pc"><rect x="7" y="7" width="82" height="82" rx="16" /></clipPath>
      </defs>
      <rect width="96" height="96" rx="22" fill="#f0eff0" />
      <g clipPath="url(#pc)">
        <rect x="7" y="7" width="82" height="46" fill="url(#pv)" /><rect x="7" y="52" width="82" height="13" fill="#27366a" /><rect x="7" y="65" width="82" height="26" fill="#5e6e8c" />
        <path d="M7 74l10-6 8 6 9-4 8 8v12H7z" fill="#c9bda6" /><path d="M7 66l8 3 6-2 10 6-8 2-16-3z" fill="#eef2f6" /><path d="M12 80l10-4 8 8-6 6H10z" fill="#8a7355" />
      </g>
      <path d="M50 66h38l10 30q0 6-6 6H48q-6 0-6-6z" fill="url(#pg)" stroke="#4a4a4a" strokeWidth="1.500" />
      <path d="M56 74h26l6 20H52z" fill="#b9c8cf" /><path d="M60 92l6-14 6 8 6-4 4 12z" fill="#f4f6f6" />
      <rect x="47" y="47" width="44" height="22" rx="6" fill="#151515" /><ellipse cx="69" cy="50" rx="20" ry="4" fill="#3a3a3a" />
    </svg>) },
  { key: "aperture", w: "w-[126px]", dot: true, el: (
    <span className="flex size-24 items-center justify-center rounded-[20px] bg-[#4f90c8]"><Aperture className="size-[70px]" blade="#ffffff" gap="#4f90c8" /></span>) },
  { key: "settings", w: "w-[126px]", dot: true, el: (
    <span className="relative size-24">
      <svg viewBox="0 0 96 96" className="size-24">
        <defs><linearGradient id="sy" x2="0" y2="1"><stop offset="0" stopColor="#ccd6d9" /><stop offset="1" stopColor="#8e8c8c" /></linearGradient></defs>
        <rect width="96" height="96" rx="22" fill="url(#sy)" /><circle cx="48" cy="48" r="42" fill="#26282a" />
        <circle cx="48" cy="48" r="34" fill="none" stroke="#8e9498" strokeWidth="6" /><circle cx="48" cy="48" r="39" fill="none" stroke="#aab0b3" strokeWidth="3" strokeDasharray="2 2" />
        <circle cx="48" cy="48" r="21" fill="none" stroke="#8e9498" strokeWidth="5" />
        <path d="M48 48h34M48 48L31 18M48 48L31 78" stroke="#9ba1a4" strokeWidth="4" /><circle cx="48" cy="48" r="4" fill="#6f7578" />
      </svg>
      <span className="absolute top-[-12px] right-[-16px] flex size-[45px] items-center justify-center rounded-full bg-[#ea5048] text-[25px] text-white">2</span>
    </span>) },
  { key: "shield", w: "w-[125px]", dot: true, el: (
    <svg viewBox="0 0 104 104" className="size-[104px]" fill="none" stroke="#fff" strokeWidth="3.600">
      <rect width="104" height="104" rx="18" fill="#d32c35" stroke="none" />
      <path d="M52 7c5 6 12 8 34 10 3 40-2 62-34 80C20 79 15 57 18 17 40 15 47 13 52 7z" />
      <path d="M38 55c-8-2-8-14 1-15 1-15 24-15 25 0 10 1 10 14 1 15zM52 55v12M34 67h36M46 56v10" />
    </svg>) },
  { key: "d2", w: "w-[58px]", el: <Divider /> },
  { key: "diskimage", w: "w-[124px]", el: (
    <svg viewBox="0 0 76 106" className="h-[106px] w-[76px]">
      <path d="M0 8h10V0h36l18 30 12 10v66H0z" fill="#fafafa" /><path d="M49 8v24h22z" fill="#dcdcdc" />
      <rect x="15" y="44" width="46" height="46" rx="3" fill="#aebabf" /><rect x="21" y="45" width="25" height="6" fill="#222" /><circle cx="38" cy="66" r="16" fill="#b9c4c8" stroke="#94a0a5" strokeWidth="1.500" /><circle cx="38" cy="66" r="5" fill="none" stroke="#94a0a5" /><path d="M15 83h46v6H15z" fill="#343a3d" />
    </svg>) },
  { key: "techspot", w: "w-[126px]", el: (
    <span className="flex size-[118px] items-center justify-center rounded-[28px] bg-white pb-[4px] font-['Open_Sans',sans-serif] text-[25px] tracking-tight text-[#222]"><b className="font-semibold">Tech</b><span className="font-light">Spot</span></span>) },
  { key: "trash", w: "w-[126px]", el: (
    <svg viewBox="0 0 84 108" className="h-[110px] w-[85px]">
      <defs><linearGradient id="tr"><stop offset="0" stopColor="#d3d1da" /><stop offset="0.500" stopColor="#f2f1f3" /><stop offset="1" stopColor="#c9c6d2" /></linearGradient></defs>
      <path d="M1 16q41 16 82 0l-9 84q-2 8-12 8H22q-10 0-12-8z" fill="url(#tr)" />
      <ellipse cx="42" cy="16" rx="41" ry="10" fill="#b6b3bf" />
      <path d="M10 16L20 3l14 6 12-8 8 6 14-2 8 14-16 6-20 2-20-3z" fill="#e8e8ea" /><path d="M22 12l12 4-6 8zM40 8l10 12-10 4zM58 8l6 12-10 2z" fill="#6b6470" /><path d="M30 14h10v6H30z" fill="#49b6d8" />
    </svg>) },
];

function Dock() {
  return (
    <div className="absolute top-[1942px] left-[108px] flex h-[148px] w-[3144px] rounded-[50px] border-2 border-[#a78cf0] bg-[linear-gradient(90deg,#7f63da_0%,#7263cd_20%,#7064dd_35%,#8763f8_48%,#8a62f8_58%,#b26cf8_66%,#a873f0_73%,#b56df8_82%,#9a6bf8_92%,#8f74f8_100%)] pl-[4px]">
      {DOCK.map((d) => (
        <div key={d.key} className={"relative flex h-[134px] shrink-0 items-center justify-center " + d.w}>
          {d.el}
          {d.dot && <i className="absolute bottom-[-8px] left-[calc(50%-4px)] size-2 rounded-full bg-[#170a6e]" />}
        </div>
      ))}
    </div>
  );
}

export default function App() {
  return (
    <div className="relative h-[2100px] w-[3360px] overflow-hidden font-['Inter',sans-serif]">
      <Desktop />
      <div className="relative"><MenuBar /></div>
      <EditorWindow />
      <div className="absolute top-[50px] left-[50px] flex h-[1824px] w-[3276px] flex-col overflow-hidden rounded-[20px] shadow-[0_0_2px_1px_rgba(0,0,0,0.45),0_30px_60px_rgba(0,0,0,0.5)]">
        <TabStrip />
        <Toolbar />
        <BookmarksBar />
        <Page />
      </div>
      <Dock />
    </div>
  );
}
